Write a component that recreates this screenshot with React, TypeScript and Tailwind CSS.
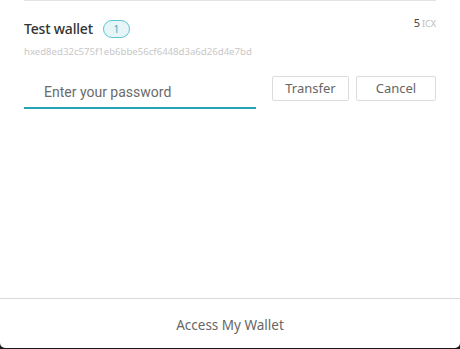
export default function App() {
  return (
    <div className="w-[460px] h-[349px] bg-[#1a1a1a]">
      <div
        className="w-[460px] h-[348px] bg-white rounded-b-[5px] flex flex-col"
        style={{ fontFamily: '"Noto Sans", sans-serif' }}
      >
        <div className="flex-1 px-[24px]">
          <div className="h-px bg-[#e3e3e3]" />
          <div className="flex items-start justify-between mt-[18px]">
            <div className="flex items-center">
              <span className="text-[14px] font-medium text-[#333] leading-[20px] tracking-[-0.2px]">Test wallet</span>
              <span className="ml-[10px] w-[27px] h-[18px] rounded-full border border-[#5fc4d1] bg-[#e6f6f8] text-[#46b3c2] text-[11px] leading-[16px] flex items-center justify-center">
                1
              </span>
            </div>
            <div className="flex items-baseline mt-[-4px]">
              <span className="text-[11px] text-[#444]">5</span>
              <span className="ml-[2px] text-[9px] text-[#bbb]">ICX</span>
            </div>
          </div>
          <div className="text-[9.6px] text-[#c8c8c8] leading-[14px] mt-[6px]">
            hxed8ed32c575f1eb6bbe56cf6448d3a6d26d4e7bd
          </div>
          <div className="flex items-start mt-[17px]">
            <div className="w-[232px] h-[33px] border-b-2 border-[#26a3b5] flex items-center pl-[20px] pt-[1px]">
              <span
                className="text-[14px] text-[#6b6b6b]"
                style={{ fontFamily: 'Roboto, Arial, sans-serif' }}
              >
                Enter your password
              </span>
            </div>
            <button className="ml-[16px] w-[77px] h-[25px] border border-[#dcdcdc] rounded-[2px] text-[13px] text-[#666] flex items-center justify-center">
              Transfer
            </button>
            <button className="ml-[7px] w-[80px] h-[25px] border border-[#dcdcdc] rounded-[2px] text-[13px] text-[#666] flex items-center justify-center">
              Cancel
            </button>
          </div>
        </div>
        <div className="h-[50px] border-t border-[#d9d9d9] flex items-center justify-center pt-[3px] text-[13.5px] text-[#666]">
          Access My Wallet
        </div>
      </div>
    </div>
  );
}
